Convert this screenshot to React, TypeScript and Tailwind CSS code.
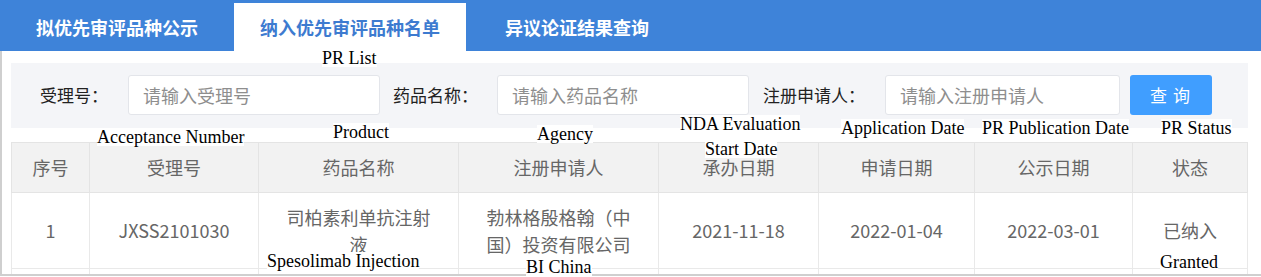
const tabs = ['拟优先审评品种公示', '纳入优先审评品种名单', '异议论证结果查询']

const headers = ['序号', '受理号', '药品名称', '注册申请人', '承办日期', '申请日期', '公示日期', '状态']
const widths = ['w-[78px]', 'w-[169px]', 'w-[200px]', 'w-[200px]', 'w-[160px]', 'w-[156px]', 'w-[158px]', 'w-[115px]']

const row = ['1', 'JXSS2101030', '司柏素利单抗注射液', '勃林格殷格翰（中国）投资有限公司', '2021-11-18', '2022-01-04', '2022-03-01', '已纳入']

// english captions pasted over the screenshot
const notes = [
  { text: 'PR List', cls: 'left-[322px] top-[49px]' },
  { text: 'Acceptance Number', cls: 'left-[97px] top-[128px]' },
  { text: 'Product', cls: 'left-[333px] top-[123px]' },
  { text: 'Agency', cls: 'left-[537px] top-[125px]' },
  { text: 'NDA Evaluation', cls: 'left-[680px] top-[115px]' },
  { text: 'Start Date', cls: 'left-[705px] top-[140px]' },
  { text: 'Application Date', cls: 'left-[841px] top-[119px]' },
  { text: 'PR Publication Date', cls: 'left-[982px] top-[119px]' },
  { text: 'PR Status', cls: 'left-[1161px] top-[119px]' },
  { text: 'Spesolimab Injection', cls: 'left-[267px] top-[252px]' },
  { text: 'BI China', cls: 'left-[526px] top-[258px]' },
  { text: 'Granted', cls: 'left-[1160px] top-[253px]' },
]

function Field({ label, placeholder, labelCls, inputCls }: { label: string; placeholder: string; labelCls: string; inputCls: string }) {
  return (
    <>
      <span className={`text-[17px] text-[#222] ${labelCls}`}>{label}</span>
      <input
        placeholder={placeholder}
        className={`h-[40px] rounded-[3px] border border-[#e3e5ea] bg-white pl-[14px] text-[18px] outline-none placeholder:text-[#8e8e8e] ${inputCls}`}
      />
    </>
  )
}

export default function App() {
  return (
    <div className="relative h-[277px] w-[1261px] overflow-hidden bg-white font-['Microsoft_YaHei','Noto_Sans_CJK_SC',sans-serif]">
      <div className="flex h-[51px] items-end bg-[#3e83d9]">
        {tabs.map((t, i) => (
          <div
            key={t}
            className={`flex h-[48px] items-center justify-center text-[18px] font-bold ${
              i === 0 ? 'w-[234px] text-white' : i === 1 ? 'w-[232px] bg-white text-[#3d7bd0]' : 'w-[222px] text-white'
            }`}
          >
            {t}
          </div>
        ))}
      </div>

      <div className="h-[225px] overflow-hidden border-b-2 border-l-2 border-[#cfcfcf] pl-[9px] pt-[12px]">
        <div className="flex h-[65px] w-[1237px] items-center bg-[#f4f5f8] pb-[2px] pl-[29px]">
          <Field label="受理号：" placeholder="请输入受理号" labelCls="w-[88px]" inputCls="w-[252px]" />
          <Field label="药品名称：" placeholder="请输入药品名称" labelCls="w-[117px] pl-[13px]" inputCls="w-[252px]" />
          <Field label="注册申请人：" placeholder="请输入注册申请人" labelCls="w-[136px] pl-[14px]" inputCls="w-[235px]" />
          <button className="ml-[10px] h-[40px] w-[82px] rounded-[3px] bg-[#409eff] pl-[4px] text-[17px] tracking-[6px] text-white">查询</button>
        </div>

        <table className="mt-[14px] w-[1237px] table-fixed border-collapse text-[18px] text-[#666]">
          <thead>
            <tr className="h-[50px] bg-[#f2f2f2]">
              {headers.map((h, i) => (
                <th key={h} className={`${widths[i]} border border-[#e4e4e4] font-normal`}>
                  {h}
                </th>
              ))}
            </tr>
          </thead>
          <tbody>
            <tr className="h-[76px]">
              {row.map((c, i) => (
                <td key={i} className={`border border-[#e9e9e9] text-center align-middle ${i === 2 || i === 3 ? 'px-[24px] leading-[27px]' : ''}`}>
                  {c}
                </td>
              ))}
            </tr>
            <tr className="h-[40px]">
              {row.map((_, i) => (
                <td key={i} className="border border-[#e9e9e9]" />
              ))}
            </tr>
          </tbody>
        </table>
      </div>

      {notes.map((n) => (
        <span key={n.text} className={`absolute bg-white font-['Liberation_Serif',serif] text-[18px] leading-[18px] text-black ${n.cls}`}>
          {n.text}
        </span>
      ))}
    </div>
  )
}
